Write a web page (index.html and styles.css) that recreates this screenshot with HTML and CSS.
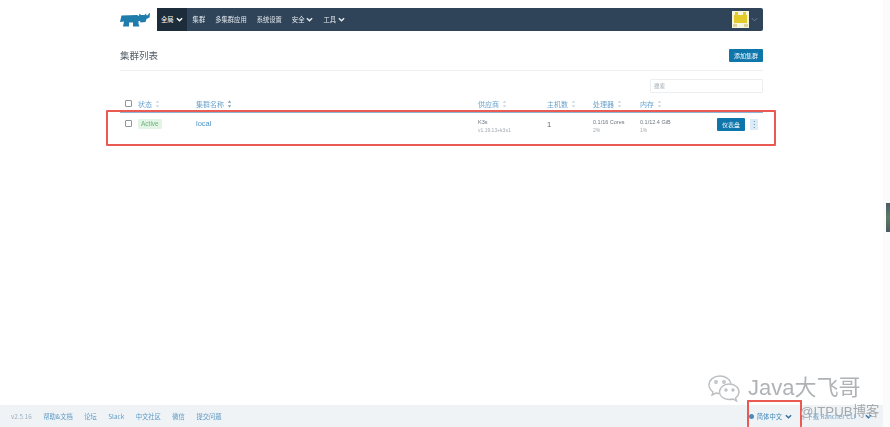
FILE: index.html
```html
<!DOCTYPE html>
<html lang="zh">
<head>
<meta charset="utf-8">
<title>集群列表</title>
<link rel="stylesheet" href="styles.css">
</head>
<body>
<div class="page">
  <main class="content">
    <header class="topbar">
      <svg class="logo" viewBox="0 0 30 14" width="30" height="14"><path fill="#1f7cab" d="M1.500 2.500 L17 2 L19 3 L19.500 .5 L21 2 L24.500 2 L26 .5 L26.500 2.500 L28 2 L29 0 L30 .5 L29.500 4.500 L26.500 6 L25.500 9 L20.500 9.500 L20 8 L18.500 8 L18.500 11 L19.500 13.500 L13 13.500 L13 9.500 L9 9.500 L9 13.500 L3 13.500 L4 8.500 L0 9 Z"/></svg>
      <nav class="nav">
        <a class="nav-item active">全局 <svg class="chev" viewBox="0 0 8 5"><path d="M1 1l3 3 3-3"/></svg></a>
        <a class="nav-item">集群</a>
        <a class="nav-item">多集群应用</a>
        <a class="nav-item">系统设置</a>
        <a class="nav-item">安全 <svg class="chev" viewBox="0 0 8 5"><path d="M1 1l3 3 3-3"/></svg></a>
        <a class="nav-item">工具 <svg class="chev" viewBox="0 0 8 5"><path d="M1 1l3 3 3-3"/></svg></a>
        <div class="user">
          <svg class="avatar" viewBox="0 0 17 17" width="17" height="17"><rect width="17" height="17" fill="#f8f6dc"/><rect x="2" y="4" width="13" height="8" fill="#e3cb2c"/><rect x="3" y="1" width="3" height="3" fill="#e3cb2c"/><rect x="11" y="1" width="3" height="3" fill="#e3cb2c"/><rect x="1" y="13" width="4" height="3" fill="#dcd69c"/><rect x="12" y="13" width="4" height="3" fill="#dcd69c"/></svg>
          <svg class="chev dim" viewBox="0 0 8 5"><path d="M1 1l3 3 3-3"/></svg>
        </div>
      </nav>
    </header>

    <section class="title-row">
      <h1 class="title">集群列表</h1>
      <button class="btn btn-add">添加集群</button>
    </section>

    <div class="search-row"><div class="search">搜索</div></div>

    <div class="grid head">
      <span class="check"></span>
      <span class="th">状态 <svg class="sort" viewBox="0 0 5 9"><path d="M2.500 0.500l2 2.500h-4zM2.500 8.500l2-2.500h-4z"/></svg></span>
      <span class="th">集群名称 <svg class="sort sort-active" viewBox="0 0 5 9"><path d="M2.500 0.500l2 2.500h-4zM2.500 8.500l2-2.500h-4z"/></svg></span>
      <span class="th">供应商 <svg class="sort" viewBox="0 0 5 9"><path d="M2.500 0.500l2 2.500h-4zM2.500 8.500l2-2.500h-4z"/></svg></span>
      <span class="th">主机数 <svg class="sort" viewBox="0 0 5 9"><path d="M2.500 0.500l2 2.500h-4zM2.500 8.500l2-2.500h-4z"/></svg></span>
      <span class="th">处理器 <svg class="sort" viewBox="0 0 5 9"><path d="M2.500 0.500l2 2.500h-4zM2.500 8.500l2-2.500h-4z"/></svg></span>
      <span class="th">内存 <svg class="sort" viewBox="0 0 5 9"><path d="M2.500 0.500l2 2.500h-4zM2.500 8.500l2-2.500h-4z"/></svg></span>
      <span></span>
    </div>

    <div class="grid row">
      <span class="check"></span>
      <div class="status"><span class="badge">Active</span></div>
      <a class="link">local</a>
      <div class="cell"><div>K3s</div><div class="sub">v1.19.13+k3s1</div></div>
      <div class="hosts">1</div>
      <div class="cell"><div>0.1/16 Cores</div><div class="sub">2%</div></div>
      <div class="cell"><div>0.1/12.4 GiB</div><div class="sub">1%</div></div>
      <div class="actions"><button class="btn btn-dash">仪表盘</button><button class="btn-more">⋮</button></div>
    </div>
  </main>

  <footer class="footer">
    <span class="version">v2.5.16</span>
    <a>帮助&amp;文档</a>
    <a>论坛</a>
    <a>Slack</a>
    <a>中文社区</a>
    <a>微信</a>
    <a>提交问题</a>
    <span class="footer-right">
      <a class="lang"><svg class="globe" viewBox="0 0 6 6"><circle cx="3" cy="3" r="3"/></svg>简体中文 <svg class="chev blue" viewBox="0 0 8 5"><path d="M1 1l3 3 3-3"/></svg></a>
      <a class="download"><span>⤓ 下载 Rancher CLI</span> <svg class="chev blue" viewBox="0 0 8 5"><path d="M1 1l3 3 3-3"/></svg></a>
    </span>
  </footer>

  <div class="scroll-strip"></div>
  <div class="red-box box-row"></div>
  <div class="red-box box-lang"></div>
  <div class="edge-tab"></div>
  <div class="wm">
    <svg class="wm-icon" viewBox="0 0 34 28" width="34" height="28"><path d="M13 2C6.500 2 2 6 2 11c0 3 1.500 5 4 7l-1 3 4-2c1 .4 2 .5 3 .5" /><path d="M13 2c5.500 0 10 3.200 11 7.500" /><path d="M22 10c5.500 0 10 3.500 10 8 0 2.500-1.500 4.500-3.500 6l1 3-3.500-2c-1.500.5-3 .5-4 .5-5.500 0-9.500-3.500-9.500-7.500s4-8 9.500-8z"/><circle cx="9" cy="8" r="1.200"/><circle cx="17" cy="8" r="1.200"/><circle cx="19" cy="16" r="1"/><circle cx="26" cy="16" r="1"/></svg>
    <span>Java大飞哥</span>
  </div>
  <div class="wm-itpub">@ITPUB博客</div>
</div>
</body>
</html>
```

FILE: styles.css
```css
* { box-sizing: border-box; }
html, body { margin: 0; height: 100%; background: #fff; }
body {
  font-family: "Noto Sans CJK SC", "Liberation Sans", sans-serif;
  overflow: hidden;
}
.page {
  position: relative;
  width: 890px;
  height: 427px;
  display: flex;
  flex-direction: column;
  overflow: hidden;
  filter: blur(0.6px);
}
.content {
  flex: 1;
  padding: 8px 127px 0 120px;
}
.topbar { display: flex; align-items: center; height: 23px; gap: 7px; }
.logo { flex: none; }
.nav {
  flex: 1;
  display: flex;
  align-items: stretch;
  height: 23px;
  background: #2f4459;
  border-radius: 0 2px 2px 0;
  color: #e6ebf0;
  font-size: 6.300px;
}
.nav-item { display: flex; align-items: center; gap: 2px; padding: 0 5px; white-space: nowrap; }
.nav-item.active { background: #1c2c3b; padding: 0 4px; margin-right: 1px; color: #fff; }
.chev { width: 7px; height: 5px; fill: none; stroke: currentColor; stroke-width: 1.600; flex: none; }
.chev.dim { color: #78899a; stroke-width: 1; }
.user { margin-left: auto; display: flex; align-items: center; gap: 2px; padding-right: 5px; }
.title-row {
  height: 40px;
  display: flex;
  align-items: flex-end;
  justify-content: space-between;
  border-bottom: 1px solid #eef0f2;
  padding-bottom: 8px;
}
.title { margin: 0; font-size: 9.500px; line-height: 13px; font-weight: 400; color: #555f68; }
.btn {
  border: 0;
  background: #0f76ab;
  color: #fff;
  font-family: inherit;
  font-size: 6px;
  border-radius: 1px;
  padding: 0;
}
.btn-add { width: 34px; height: 13px; }
.search-row { display: flex; justify-content: flex-end; padding-top: 8px; height: 24px; }
.search {
  width: 113px;
  height: 14px;
  border: 1px solid #eceff1;
  border-radius: 1px;
  font-size: 5.500px;
  line-height: 12px;
  color: #9aa3ab;
  padding-left: 3px;
}
.grid {
  display: grid;
  grid-template-columns: 13px 58px 282px 69px 46px 47px 77px 46px;
  padding-left: 5px;
  align-items: center;
}
.head {
  height: 16px;
  margin-top: 2px;
  border-bottom: 1.500px solid #8fb4d0;
  padding-bottom: 2px;
}
.th { color: #6ba3cc; font-size: 7px; display: flex; align-items: center; gap: 3px; white-space: nowrap; }
.sort { width: 5px; height: 8px; fill: #c6d5e0; }
.sort-active { fill: #7d9db5; }
.check { width: 7px; height: 7px; border: 1px solid #8e969d; border-radius: 1px; background: #fff; }
.row { height: 33px; align-items: start; padding-top: 5px; }
.row .check { margin-top: 2px; }
.status { display: flex; margin-top: 1px; }
.badge {
  display: block;
  background: #e3f4e6;
  color: #6cb57c;
  font-size: 6.500px;
  line-height: 10px;
  padding: 0 3px;
  border-radius: 1px;
  font-family: "Liberation Sans", sans-serif;
}
.link { color: #4f95c6; font-size: 7.500px; line-height: 11px; font-family: "Liberation Sans", sans-serif; }
.cell { font-size: 5.500px; line-height: 7.500px; color: #6d7780; font-family: "Liberation Sans", sans-serif; white-space: nowrap; margin-top: 1px; }
.sub { color: #a3abb2; font-size: 5px; }
.hosts { font-size: 7.500px; line-height: 12px; color: #5d666e; font-family: "Liberation Sans", sans-serif; padding-top: 1px; }
.actions { display: flex; gap: 5px; align-items: flex-start; }
.btn-dash { width: 28px; height: 13px; }
.btn-more {
  width: 8px;
  height: 11px;
  margin-top: 1px;
  border: 0;
  padding: 0;
  background: #dcebf5;
  color: #3d88bb;
  font-size: 8px;
  line-height: 11px;
  font-family: "DejaVu Sans", sans-serif;
}
.footer {
  height: 22px;
  flex: none;
  background: #eff3f6;
  display: flex;
  align-items: center;
  gap: 11.500px;
  padding: 1px 0 0 11px;
  font-size: 6.300px;
  color: #5d9ac6;
  white-space: nowrap;
}
.version { color: #9ab0c0; }
.footer-right { margin-left: auto; display: flex; gap: 10px; align-items: center; padding-right: 18px; }
.lang, .download { display: flex; align-items: center; gap: 3px; color: #3f85b8; }
.download { color: #6f9fc2; width: 70px; justify-content: space-between; }
.globe { width: 5px; height: 5px; fill: #4a8cbd; }
.chev.blue { color: #2f6f9f; }
.scroll-strip { position: absolute; left: 883px; top: 0; width: 7px; height: 427px; background: #fbfbfb; }
.red-box { position: absolute; border: 2px solid #ea5a52; border-radius: 1px; pointer-events: none; }
.box-row { left: 106px; top: 110px; width: 670px; height: 36px; }
.box-lang { left: 747px; top: 400px; width: 55px; height: 27px; border-bottom: 0; }
.edge-tab { position: absolute; left: 886px; top: 203px; width: 4px; height: 29px; background: linear-gradient(#4e5a63, #5d7a68 50%, #4e5a63); }
.wm {
  position: absolute;
  left: 707px;
  top: 374px;
  display: flex;
  align-items: center;
  gap: 7px;
  color: #b0b3b6;
  font-size: 22px;
  line-height: 28px;
  font-family: "Liberation Sans", "Noto Sans CJK SC", sans-serif;
}
.wm-icon { fill: none; stroke: #bcbfc2; stroke-width: 1.400; }
.wm-itpub {
  position: absolute;
  left: 800px;
  top: 404px;
  color: #a4a9ad;
  font-size: 13.300px;
  line-height: 16px;
  font-family: "Liberation Sans", "Noto Sans CJK SC", sans-serif;
}
```
